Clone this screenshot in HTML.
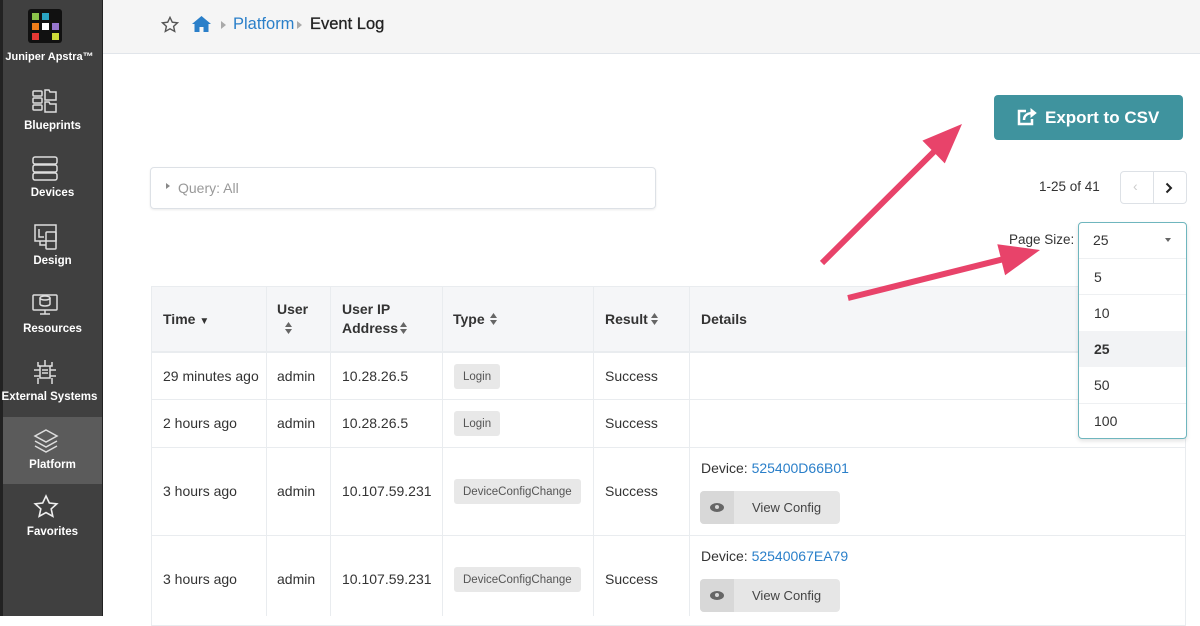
<!DOCTYPE html>
<html><head><meta charset="utf-8"><style>
*{box-sizing:border-box;margin:0;padding:0}
body{width:1200px;height:616px;overflow:hidden;background:#fff;font-family:"Liberation Sans",sans-serif;color:#333;position:relative}
.abs{position:absolute}
#side{left:0;top:0;width:103px;height:616px;background:#404040;border-left:3px solid #222;border-right:1px solid #222}
.nav{position:absolute;left:0;width:99px;text-align:center;color:#fff;font-size:11.5px;font-weight:bold;white-space:nowrap}
#hdr{left:103px;top:0;width:1097px;height:54px;background:#f5f5f5;border-bottom:1px solid #e1e5ea}
.th{position:absolute;font-size:14px;font-weight:bold;color:#333}
.td{position:absolute;font-size:14px;color:#333}
.tag{position:absolute;background:#e8e8e8;border-radius:3px;font-size:11.5px;color:#555;height:25px;line-height:27px;padding:0 9px}
.vl{position:absolute;width:1px;background:#e9ecef}
.hl{position:absolute;height:1px;background:#e9ecef;left:151px;width:1035px}
.dd{position:absolute;left:1094px;font-size:14px;color:#333}
</style></head><body>
<div id="side" class="abs">
  <div class="abs" style="left:25px;top:9px;width:34px;height:34px;background:#111;border-radius:3px"></div>
  <div class="abs" style="left:29px;top:13px;width:7px;height:7px;background:#8bc34a"></div>
  <div class="abs" style="left:39px;top:13px;width:7px;height:7px;background:#29a3c2"></div>
  <div class="abs" style="left:29px;top:23px;width:7px;height:7px;background:#f07d1a"></div>
  <div class="abs" style="left:39px;top:23px;width:7px;height:7px;background:#fff"></div>
  <div class="abs" style="left:49px;top:23px;width:7px;height:7px;background:#9575cd"></div>
  <div class="abs" style="left:29px;top:33px;width:7px;height:7px;background:#e53935"></div>
  <div class="abs" style="left:49px;top:33px;width:7px;height:7px;background:#cddc39"></div>
  <div class="nav" style="top:51px;left:-3px;font-size:11px">Juniper Apstra™</div>
  <svg class="abs" style="left:27px;top:87px" width="32" height="28" viewBox="0 0 32 28" fill="none" stroke="#ddd" stroke-width="1.5"><rect x="3" y="4" width="9" height="5" rx="1"/><rect x="3" y="11" width="9" height="5" rx="1"/><rect x="3" y="18" width="9" height="5" rx="1"/><path d="M15 3h4l1 2h6v8H15z M15 15h4l1 2h6v8H15z"/></svg>
  <div class="nav" style="top:120px">Blueprints</div>
  <svg class="abs" style="left:27px;top:155px" width="30" height="28" viewBox="0 0 30 28" fill="none" stroke="#ddd" stroke-width="1.5"><rect x="3" y="2" width="24" height="7" rx="2"/><rect x="3" y="10" width="24" height="7" rx="2"/><rect x="3" y="18" width="24" height="7" rx="2"/></svg>
  <div class="nav" style="top:187px">Devices</div>
  <svg class="abs" style="left:29px;top:222px" width="28" height="30" viewBox="0 0 28 30" fill="none" stroke="#ddd" stroke-width="1.5"><rect x="3" y="3" width="21" height="16"/><rect x="14" y="10" width="10" height="17" rx="1"/><path d="M8 19v4h6M7 7v8h5"/></svg>
  <div class="nav" style="top:255px">Design</div>
  <svg class="abs" style="left:27px;top:290px" width="30" height="28" viewBox="0 0 30 28" fill="none" stroke="#ddd" stroke-width="1.5"><rect x="3" y="5" width="24" height="15" rx="1"/><path d="M10 24h10M15 20v4"/><ellipse cx="15" cy="8" rx="5" ry="2"/><path d="M10 8v6c0 1 2 2 5 2s5-1 5-2V8"/></svg>
  <div class="nav" style="top:323px">Resources</div>
  <svg class="abs" style="left:27px;top:358px" width="30" height="28" viewBox="0 0 30 28" fill="none" stroke="#ddd" stroke-width="1.5"><rect x="10" y="8" width="10" height="12"/><path d="M12 12h6M12 15h6M15 2v6M8 4v4h2M22 4v4h-2M4 12h6M20 12h6M4 18h6M20 18h6M8 26v-6M22 26v-6"/></svg>
  <div class="nav" style="top:391px;left:-3px">External Systems</div>
  <div class="abs" style="left:0;top:417px;width:99px;height:67px;background:#5b5b5b"></div>
  <svg class="abs" style="left:29px;top:427px" width="28" height="28" viewBox="0 0 28 28" fill="none" stroke="#ddd" stroke-width="1.5"><path d="M14 3L25 9L14 15L3 9Z"/><path d="M3 14l11 6 11-6M3 19l11 6 11-6"/></svg>
  <div class="nav" style="top:459px">Platform</div>
  <svg class="abs" style="left:30px;top:494px" width="26" height="26" viewBox="0 0 26 26" fill="none" stroke="#eee" stroke-width="1.6"><path d="M13 2l3.3 7 7.5.8-5.6 5.1 1.6 7.4L13 18.5l-6.8 3.8 1.6-7.4L2.2 9.8 9.7 9z"/></svg>
  <div class="nav" style="top:526px">Favorites</div>
</div>
<div id="hdr" class="abs"></div>
<svg class="abs" style="left:161px;top:16px" width="18" height="18" viewBox="0 0 26 26" fill="none" stroke="#555" stroke-width="2"><path d="M13 2l3.3 7 7.5.8-5.6 5.1 1.6 7.4L13 18.5l-6.8 3.8 1.6-7.4L2.2 9.8 9.7 9z"/></svg>
<svg class="abs" style="left:192px;top:16px" width="19" height="16" viewBox="0 0 19 16"><path d="M9.5 0L0 8h2.5v8h5v-5h4v5h5V8H19z" fill="#2a7fc9"/></svg>
<div class="abs" style="left:221px;top:21px;border-left:5px solid #aaa;border-top:4px solid transparent;border-bottom:4px solid transparent"></div>
<div class="abs" style="left:233px;top:15px;font-size:16.5px;color:#2a7fc9">Platform</div>
<div class="abs" style="left:297px;top:21px;border-left:5px solid #aaa;border-top:4px solid transparent;border-bottom:4px solid transparent"></div>
<div class="abs" style="left:310px;top:15px;font-size:16.5px;color:#222;-webkit-text-stroke:0.3px #222">Event Log</div>

<div class="abs" style="left:994px;top:95px;width:189px;height:45px;background:#3f939e;border-radius:4px;color:#fff;font-size:17px;font-weight:bold;line-height:45px;padding-left:51px">Export to CSV</div>
<svg class="abs" style="left:1016px;top:107px" width="22" height="20" viewBox="0 0 22 20" fill="none" stroke="#fff" stroke-width="2.5"><path d="M10 4H3v13h13v-5"/><path d="M8 13c0-5 4-7 9-7" /><path d="M15 2l5 4-5 4z" fill="#fff" stroke-width="1"/></svg>

<div class="abs" style="left:150px;top:167px;width:506px;height:42px;border:1px solid #dde1e6;border-radius:4px;box-shadow:0 1px 2px rgba(0,0,0,.08)"></div>
<div class="abs" style="left:166px;top:183px;border-left:4px solid #888;border-top:3.5px solid transparent;border-bottom:3.5px solid transparent"></div>
<div class="abs" style="left:178px;top:180px;font-size:14px;color:#999">Query: All</div>

<div class="abs" style="left:1039px;top:179px;font-size:13.5px;color:#333">1-25 of 41</div>
<div class="abs" style="left:1120px;top:171px;width:67px;height:33px;border:1px solid #dde1e6;border-radius:4px"></div>
<div class="abs" style="left:1153px;top:172px;width:1px;height:31px;background:#dde1e6"></div>
<div class="abs" style="left:1133px;top:178px;font-size:14px;color:#ccc">‹</div>
<svg class="abs" style="left:1165px;top:182px" width="8" height="12" viewBox="0 0 8 12" fill="none" stroke="#222" stroke-width="2"><path d="M1.5 1.5l4.5 4.5-4.5 4.5"/></svg>

<div class="abs" style="left:1009px;top:232px;font-size:13.5px;color:#333">Page Size:</div>

<!-- table -->
<div class="abs" style="left:151px;top:286px;width:1035px;height:340px;border:1px solid #e9ecef"></div>
<div class="abs" style="left:152px;top:287px;width:1033px;height:65px;background:#f5f6f8"></div>
<div class="hl" style="top:351px;height:2px"></div>
<div class="hl" style="top:399px"></div>
<div class="hl" style="top:447px"></div>
<div class="hl" style="top:535px"></div>
<div class="vl" style="left:266px;top:286px;height:330px"></div>
<div class="vl" style="left:330px;top:286px;height:330px"></div>
<div class="vl" style="left:442px;top:286px;height:330px"></div>
<div class="vl" style="left:593px;top:286px;height:330px"></div>
<div class="vl" style="left:689px;top:286px;height:330px"></div>

<div class="th" style="left:163px;top:311px">Time <span style="font-size:10px">▼</span></div>
<div class="th" style="left:277px;top:301px">User</div>
<div class="th" style="left:342px;top:301px">User IP</div>
<div class="th" style="left:342px;top:320px">Address</div>
<div class="th" style="left:453px;top:311px">Type</div>
<div class="th" style="left:605px;top:311px">Result</div>
<div class="th" style="left:701px;top:311px">Details</div>
<svg class="abs" style="left:285px;top:322px" width="7" height="12" viewBox="0 0 7 12" fill="#666"><path d="M0 5L3.5 0 7 5zM0 7l3.5 5L7 7z"/></svg>
<svg class="abs" style="left:400px;top:322px" width="7" height="12" viewBox="0 0 7 12" fill="#666"><path d="M0 5L3.5 0 7 5zM0 7l3.5 5L7 7z"/></svg>
<svg class="abs" style="left:490px;top:313px" width="7" height="12" viewBox="0 0 7 12" fill="#666"><path d="M0 5L3.5 0 7 5zM0 7l3.5 5L7 7z"/></svg>
<svg class="abs" style="left:651px;top:313px" width="7" height="12" viewBox="0 0 7 12" fill="#666"><path d="M0 5L3.5 0 7 5zM0 7l3.5 5L7 7z"/></svg>

<div class="td" style="left:163px;top:368px">29 minutes ago</div>
<div class="td" style="left:277px;top:368px">admin</div>
<div class="td" style="left:342px;top:368px">10.28.26.5</div>
<div class="tag" style="left:454px;top:364px">Login</div>
<div class="td" style="left:605px;top:368px">Success</div>

<div class="td" style="left:163px;top:415px">2 hours ago</div>
<div class="td" style="left:277px;top:415px">admin</div>
<div class="td" style="left:342px;top:415px">10.28.26.5</div>
<div class="tag" style="left:454px;top:411px">Login</div>
<div class="td" style="left:605px;top:415px">Success</div>

<div class="td" style="left:163px;top:483px">3 hours ago</div>
<div class="td" style="left:277px;top:483px">admin</div>
<div class="td" style="left:342px;top:483px">10.107.59.231</div>
<div class="tag" style="left:454px;top:479px">DeviceConfigChange</div>
<div class="td" style="left:605px;top:483px">Success</div>
<div class="td" style="left:701px;top:460px">Device: <span style="color:#2a7fc9">525400D66B01</span></div>
<div class="abs" style="left:700px;top:491px;width:140px;height:33px;background:#e6e6e6;border-radius:4px"></div>
<div class="abs" style="left:700px;top:491px;width:34px;height:33px;background:#d8d8d8;border-radius:4px 0 0 4px"></div>
<div class="abs" style="left:710px;top:503px;width:14px;height:9px;border-radius:50%;background:#666"></div>
<div class="abs" style="left:715px;top:505px;width:4px;height:4px;border-radius:50%;background:#d8d8d8"></div>
<div class="abs" style="left:752px;top:500px;font-size:13px;color:#444">View Config</div>

<div class="td" style="left:163px;top:571px">3 hours ago</div>
<div class="td" style="left:277px;top:571px">admin</div>
<div class="td" style="left:342px;top:571px">10.107.59.231</div>
<div class="tag" style="left:454px;top:567px">DeviceConfigChange</div>
<div class="td" style="left:605px;top:571px">Success</div>
<div class="td" style="left:701px;top:548px">Device: <span style="color:#2a7fc9">52540067EA79</span></div>
<div class="abs" style="left:700px;top:579px;width:140px;height:33px;background:#e6e6e6;border-radius:4px"></div>
<div class="abs" style="left:700px;top:579px;width:34px;height:33px;background:#d8d8d8;border-radius:4px 0 0 4px"></div>
<div class="abs" style="left:710px;top:591px;width:14px;height:9px;border-radius:50%;background:#666"></div>
<div class="abs" style="left:715px;top:593px;width:4px;height:4px;border-radius:50%;background:#d8d8d8"></div>
<div class="abs" style="left:752px;top:588px;font-size:13px;color:#444">View Config</div>

<!-- dropdown -->
<div class="abs" style="left:1078px;top:222px;width:109px;height:217px;background:#fff;border:1px solid #6fb6be;border-radius:4px;box-shadow:0 2px 4px rgba(0,0,0,.12)"></div>
<div class="abs" style="left:1079px;top:258px;width:107px;height:1px;background:#eef0f2"></div>
<div class="abs" style="left:1079px;top:294px;width:107px;height:1px;background:#eef0f2"></div>
<div class="abs" style="left:1079px;top:331px;width:107px;height:36px;background:#f2f3f5"></div>
<div class="abs" style="left:1079px;top:403px;width:107px;height:1px;background:#eef0f2"></div>
<div class="dd" style="left:1093px;top:232px">25</div>
<div class="abs" style="left:1165px;top:238px;border-top:4px solid #666;border-left:3.5px solid transparent;border-right:3.5px solid transparent"></div>
<div class="dd" style="top:269px">5</div>
<div class="dd" style="top:305px">10</div>
<div class="dd" style="top:341px;font-weight:bold">25</div>
<div class="dd" style="top:377px">50</div>
<div class="dd" style="top:413px">100</div>

<!-- arrows -->
<svg class="abs" style="left:0;top:0" width="1200" height="616">
<path d="M824.1 265.1L935.7 154.1L944.8 163.4L962 124L922.4 140.6L931.5 149.9L819.9 260.9Z" fill="#e8436a"/>
<path d="M848.7 300.9L1001.9 262.6L1005.1 275.2L1040 250L997.3 244.2L1000.5 256.8L847.3 295.1Z" fill="#e8436a"/>
</svg>
</body></html>
